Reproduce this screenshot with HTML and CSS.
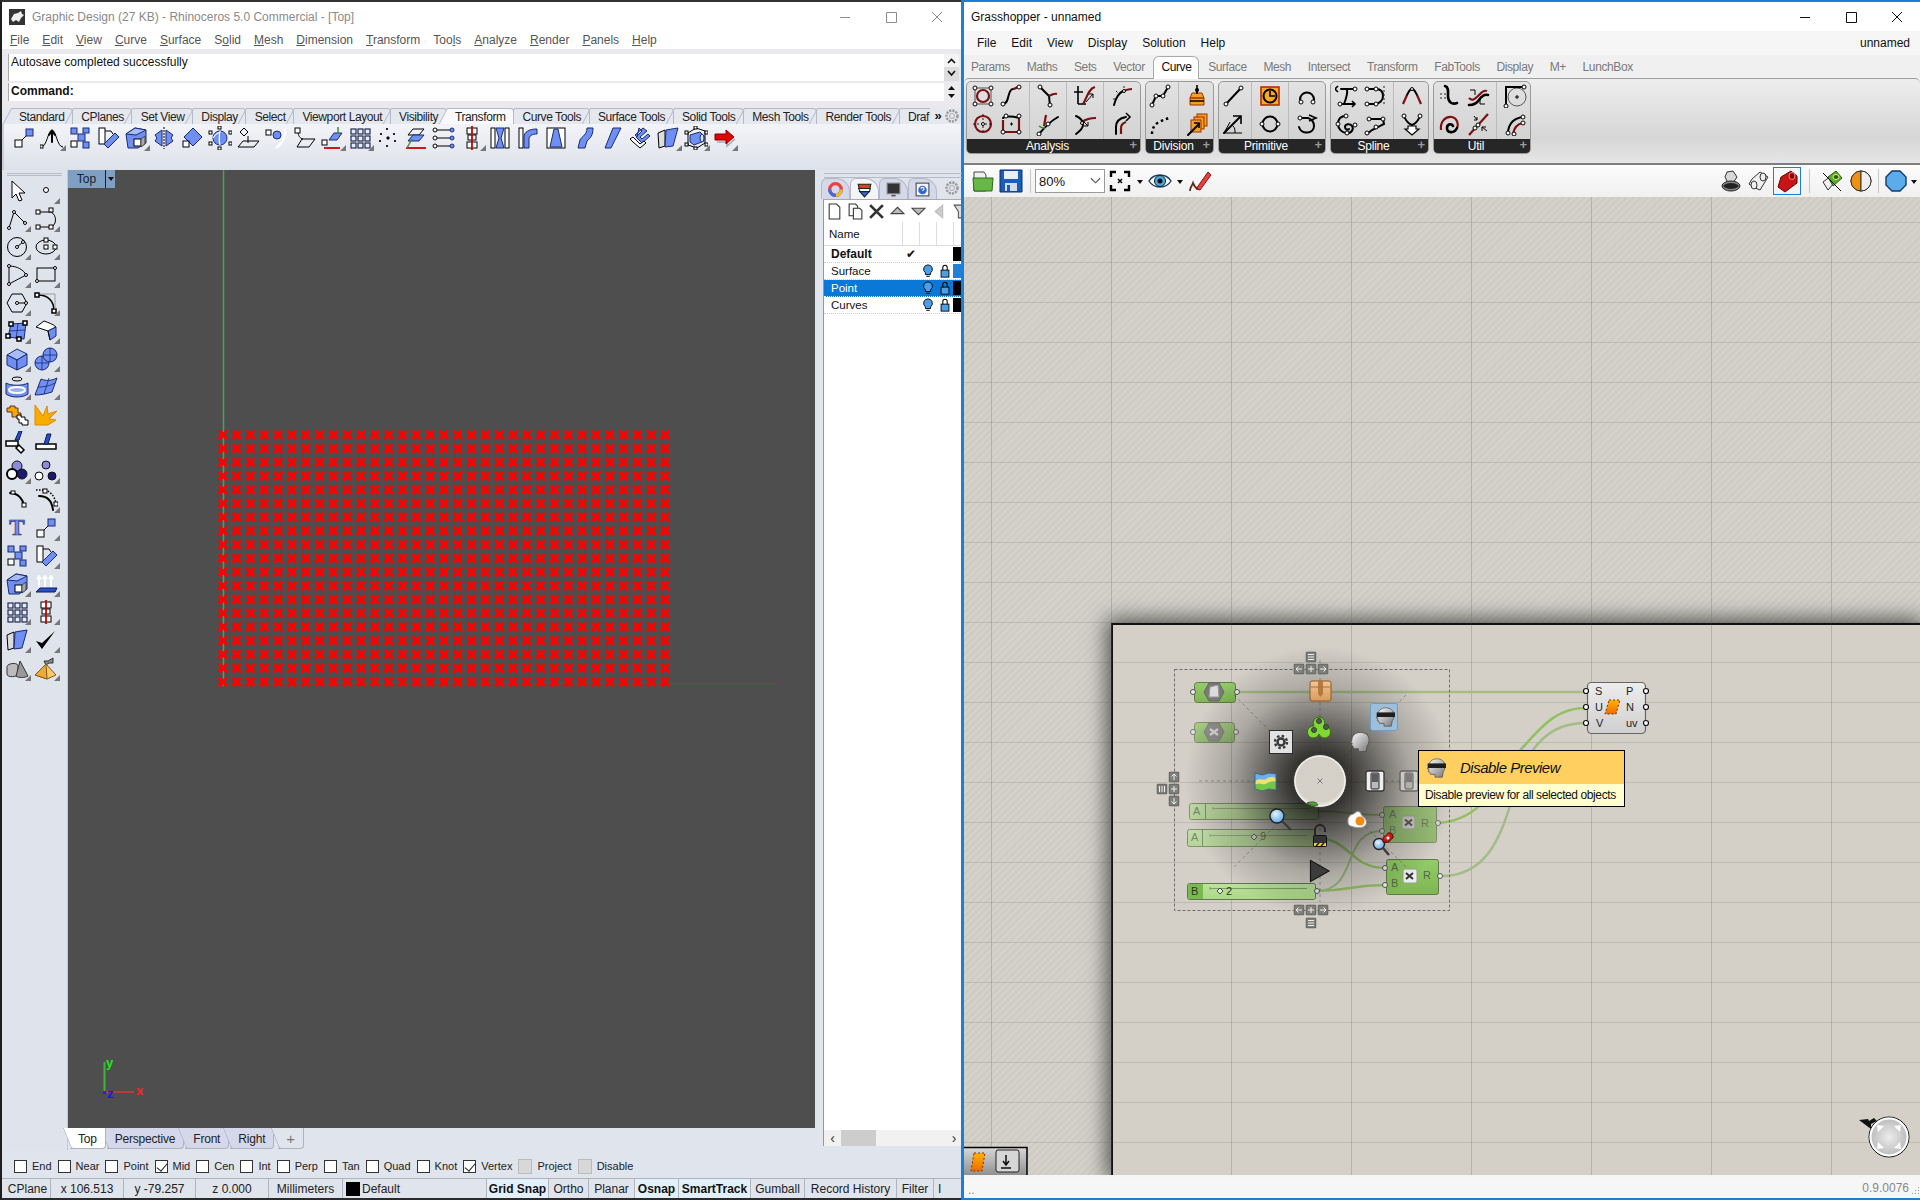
FILE: index.html
```html
<!DOCTYPE html>
<html lang="en">
<head>
<meta charset="utf-8">
<title>Rhinoceros and Grasshopper</title>
<link rel="stylesheet" href="styles.css">
</head>
<body>
<svg class="defs" width="0" height="0" aria-hidden="true">
<defs>
<linearGradient id="gHead" x1="0" y1="0" x2="1" y2="1"><stop offset="0" stop-color="#fff"/><stop offset="1" stop-color="#777"/></linearGradient>
<linearGradient id="gNode" x1="0" y1="0" x2="0" y2="1"><stop offset="0" stop-color="#93cc68"/><stop offset="1" stop-color="#7fb653"/></linearGradient>
<linearGradient id="gSlide" x1="0" y1="0" x2="0" y2="1"><stop offset="0" stop-color="#bde29e"/><stop offset="1" stop-color="#abd886"/></linearGradient>
<linearGradient id="gSurf" x1="0" y1="0" x2="0" y2="1"><stop offset="0" stop-color="#ededed"/><stop offset="1" stop-color="#cfcfcf"/></linearGradient>
<linearGradient id="gOrange" x1="0" y1="0" x2="0" y2="1"><stop offset="0" stop-color="#ffb300"/><stop offset="1" stop-color="#f06a00"/></linearGradient>
<linearGradient id="gBox" x1="0" y1="0" x2="0" y2="1"><stop offset="0" stop-color="#f0c896"/><stop offset="1" stop-color="#d99a5c"/></linearGradient>
<linearGradient id="gDock" x1="0" y1="0" x2="0" y2="1"><stop offset="0" stop-color="#d8d8d8"/><stop offset="1" stop-color="#8a8a8a"/></linearGradient>
<radialGradient id="gShade"><stop offset="0" stop-color="#000" stop-opacity=".78"/><stop offset=".2" stop-color="#000" stop-opacity=".76"/><stop offset=".46" stop-color="#000" stop-opacity=".45"/><stop offset=".67" stop-color="#000" stop-opacity=".2"/><stop offset="1" stop-color="#000" stop-opacity="0"/></radialGradient>
<radialGradient id="gBall" cx=".5" cy=".5" r=".55"><stop offset="0" stop-color="#ececec"/><stop offset="1" stop-color="#b4b4b4"/></radialGradient>
<radialGradient id="gHub" cx=".5" cy=".45" r=".55"><stop offset="0" stop-color="#d6d2ca"/><stop offset=".8" stop-color="#d4d0c8"/><stop offset="1" stop-color="#f2f0ea"/></radialGradient>
<radialGradient id="gGlass" cx=".4" cy=".35" r=".7"><stop offset="0" stop-color="#e4f4ff"/><stop offset="1" stop-color="#5aa2e6"/></radialGradient>
<radialGradient id="gRed" cx=".4" cy=".35" r=".8"><stop offset="0" stop-color="#f03030"/><stop offset="1" stop-color="#8c0a0a"/></radialGradient>
<pattern id="pts" x="216" y="428" width="13.82" height="13.72" patternUnits="userSpaceOnUse"><path class="ptx" d="M3 2.800 10.800 10.900M10.800 2.800 3 10.900"/></pattern>
<symbol id="sa" viewBox="0 0 24 24"><rect class="wh" x="3" y="14" width="7" height="7"/><rect class="bl" x="14" y="3" width="7" height="7"/><path class="kl" d="M10 14l4-4"/></symbol>
<symbol id="sq" viewBox="0 0 24 24"><rect class="bl" x="3" y="2" width="6" height="6"/><rect class="wh" x="3" y="15" width="6" height="6"/><rect class="bl" x="10" y="8" width="7" height="7"/><rect class="bl" x="15" y="2" width="6" height="5"/><rect class="bl" x="15" y="16" width="6" height="6"/></symbol>
<symbol id="rot" viewBox="0 0 24 24"><rect class="wh" x="3" y="2" width="6" height="16"/><path class="bl" d="M19 7l4 4-11 11-4-4z"/><path class="kl" d="M9 5h6l2 3"/></symbol>
<symbol id="sol" viewBox="0 0 24 24"><path class="bl" d="M2 8l9-6 11 2v13l-8 5H4z"/><path class="lb" d="M2 8l9-6 11 2-10 5z"/><rect class="wh" x="10" y="13" width="7" height="7"/><path class="gf" d="M17 13l4-3v8l-4 3z"/></symbol>
<symbol id="grd" viewBox="0 0 24 24"><rect class="gc" x="3" y="3" width="5" height="5"/><rect class="gc" x="10" y="3" width="5" height="5"/><rect class="gc" x="17" y="3" width="5" height="5"/><rect class="gc" x="3" y="10" width="5" height="5"/><rect class="gc" x="10" y="10" width="5" height="5"/><rect class="gc" x="17" y="10" width="5" height="5"/><rect class="gc" x="3" y="17" width="5" height="5"/><rect class="gc" x="10" y="17" width="5" height="5"/><rect class="gc" x="17" y="17" width="5" height="5"/></symbol>
<symbol id="stk" viewBox="0 0 24 24"><rect class="wh" x="7" y="2" width="10" height="6"/><rect class="wh" x="8" y="9" width="8" height="5"/><rect class="wh" x="7" y="16" width="10" height="6"/><path class="rl" d="M12 0v24"/></symbol>
<symbol id="bks" viewBox="0 0 24 24"><path class="wg" d="M2 7l7-3v16l-6 2z"/><path class="bl" d="M10 4l12-2-5 18-8 1z"/></symbol>
<symbol id="head" viewBox="0 0 24 24"><path class="hd" d="M5 11C5 5 9 2 14 2c5 0 9 3 9 8 0 3-1 5-2 6l-1 6h-8v-3H7l-1-3H4.500l1-3L3.500 13z"/></symbol>
<symbol id="blind" viewBox="0 0 24 24"><path class="hd" d="M5 11C5 5 9 2 14 2c5 0 9 3 9 8 0 3-1 5-2 6l-1 6h-8v-3H7l-1-3H4.500l1-3L3.500 13z"/><path class="bf" d="M4 7h20v5H4z"/></symbol>
<symbol id="bL" viewBox="0 0 11 11"><rect class="wb" x=".5" y=".5" width="10" height="10" rx="1"/><path class="wg2" d="M8.500 5.500h-6M5 3 2.500 5.500 5 8"/></symbol>
<symbol id="bR" viewBox="0 0 11 11"><rect class="wb" x=".5" y=".5" width="10" height="10" rx="1"/><path class="wg2" d="M2.500 5.500h6M6 3l2.500 2.500L6 8"/></symbol>
<symbol id="bU" viewBox="0 0 11 11"><rect class="wb" x=".5" y=".5" width="10" height="10" rx="1"/><path class="wg2" d="M5.500 8.500v-6M3 5l2.500-2.500L8 5"/></symbol>
<symbol id="bD" viewBox="0 0 11 11"><rect class="wb" x=".5" y=".5" width="10" height="10" rx="1"/><path class="wg2" d="M5.500 2.500v6M3 6l2.500 2.500L8 6"/></symbol>
<symbol id="bP" viewBox="0 0 11 11"><rect class="wb" x=".5" y=".5" width="10" height="10" rx="1"/><path class="wg2" d="M5.500 2.500v6M2.500 5.500h6"/></symbol>
<symbol id="bH" viewBox="0 0 11 11"><rect class="wb" x=".5" y=".5" width="10" height="10" rx="1"/><path class="wg2" d="M2.500 3h6M2.500 5.500h6M2.500 8h6"/></symbol>
<symbol id="bV" viewBox="0 0 11 11"><rect class="wb" x=".5" y=".5" width="10" height="10" rx="1"/><path class="wg2" d="M3 2.500v6M5.500 2.500v6M8 2.500v6"/></symbol>
<symbol id="tog" viewBox="0 0 22 24"><rect class="tg1" x="2" y="2" width="18" height="20" rx="2"/><rect class="tg2" x="7" y="4" width="8" height="16" rx="1"/><rect class="tg3" x="8" y="5" width="6" height="8"/></symbol>
<symbol id="bulb" viewBox="0 0 14 16"><path class="bu" d="M7 1a5 5 0 0 1 3 9v2H4v-2a5 5 0 0 1 3-9z"/><path class="bu2" d="M5 14h4"/></symbol>
<symbol id="lock" viewBox="0 0 14 16"><rect class="bu" x="2.500" y="7" width="9" height="8"/><path class="lk" d="M4.500 7V4a2.500 2.500 0 0 1 5 0v3"/></symbol>
</defs>
</svg>

<div class="desk">
<section class="rh">
  <header class="rh-title">
    <svg class="rh-logo" viewBox="0 0 16 16"><rect class="lg1" width="16" height="16"/><path class="lg2" d="M2 10l3-5 4-1 3-2 1 3 2 1-3 3-2 4-3-2-3 2z"/></svg>
    <span class="rh-name">Graphic Design (27 KB) - Rhinoceros 5.0 Commercial - [Top]</span>
    <span class="ctrls ctrls-off">
      <svg viewBox="0 0 46 16"><path d="M18 8.500h10"/></svg>
      <svg viewBox="0 0 46 16"><path d="M18.500 3.500h10v10h-10z"/></svg>
      <svg viewBox="0 0 46 16"><path d="M18 3l10 10M28 3 18 13"/></svg>
    </span>
  </header>
  <nav class="rh-menu"><span><u>F</u>ile</span><span><u>E</u>dit</span><span><u>V</u>iew</span><span><u>C</u>urve</span><span><u>S</u>urface</span><span>S<u>o</u>lid</span><span><u>M</u>esh</span><span><u>D</u>imension</span><span><u>T</u>ransform</span><span>Too<u>l</u>s</span><span><u>A</u>nalyze</span><span><u>R</u>ender</span><span><u>P</u>anels</span><span><u>H</u>elp</span></nav>
  <div class="cmd">
    <div class="cmd-hist">Autosave completed successfully</div>
    <div class="cmd-scroll"><svg viewBox="0 0 15 27"><path class="chev" d="M4 9l3.500-3.500L11 9"/><rect class="scr" y="13" width="15" height="14"/><path class="chev" d="M4 17l3.500 4L11 17"/></svg></div>
    <div class="cmd-line">Command:</div>
    <div class="cmd-spin"><svg viewBox="0 0 15 18"><path class="spin" d="M7.500 3 11 7H4zM7.500 15 4 11h7z"/></svg></div>
  </div>
  <div class="rh-tabs">
    <div class="tabs-clip">
      <span class="tab">Standard</span><span class="tab">CPlanes</span><span class="tab">Set View</span><span class="tab">Display</span><span class="tab">Select</span><span class="tab">Viewport Layout</span><span class="tab">Visibility</span><span class="tab on">Transform</span><span class="tab">Curve Tools</span><span class="tab">Surface Tools</span><span class="tab">Solid Tools</span><span class="tab">Mesh Tools</span><span class="tab">Render Tools</span><span class="tab">Draf</span>
    </div>
    <span class="more">»</span>
    <svg class="gear" viewBox="0 0 16 16"><circle class="gr1" cx="8" cy="8" r="5.500"/><circle class="gr2" cx="8" cy="8" r="2.500"/></svg>
  </div>
  <div class="rh-bar">
    <span class="t"><svg viewBox="0 0 24 24"><use href="#sa"/></svg></span>
    <span class="t m"><svg viewBox="0 0 24 24"><path class="kl" d="M1 21C7 21 8 4 12 4s5 17 11 17"/><path class="kt" d="M12 16V6M9 9l3-4 3 4"/><rect class="wh" x="0" y="19" width="3" height="3"/></svg></span>
    <span class="t"><svg viewBox="0 0 24 24"><use href="#sq"/></svg></span>
    <span class="t"><svg viewBox="0 0 24 24"><use href="#rot"/></svg></span>
    <span class="t m"><svg viewBox="0 0 24 24"><use href="#sol"/></svg></span>
    <span class="t"><svg viewBox="0 0 24 24"><path class="bl" d="M10 4v16L3 15l2-3-2-3zM14 4v16l7-5-2-3 2-3z"/><path class="ds" d="M12 1v22"/></svg></span>
    <span class="t"><svg viewBox="0 0 24 24"><path class="bl" d="M13 2l9 9-9 9-9-9z"/><rect class="wh" x="3" y="15" width="6" height="6"/></svg></span>
    <span class="t"><svg viewBox="0 0 24 24"><path class="bl" d="M12 5a7 7 0 1 1-.1 0z"/><path class="wl" d="M5 12c2-3 4-5 7-6M12 5c-1 5-1 10 0 14"/><rect class="wh" x="10" y="0" width="3" height="3"/><rect class="wh" x="1" y="5" width="3" height="3"/><rect class="wh" x="21" y="5" width="3" height="3"/><rect class="wh" x="1" y="16" width="3" height="3"/><rect class="wh" x="21" y="16" width="3" height="3"/><rect class="wh" x="10" y="21" width="3" height="3"/></svg></span>
    <span class="t"><svg viewBox="0 0 24 24"><path class="kl" d="M8 2l4 4-4 4-4-4zM2 21l5-6h16l-5 6zM12 10v7"/></svg></span>
    <span class="t"><svg viewBox="0 0 24 24"><rect class="wh" x="2" y="4" width="5" height="5"/><circle class="bl" cx="13" cy="9" r="4"/><path class="wl2" d="M21 2c1 8-2 15-9 20"/></svg></span>
    <span class="t"><svg viewBox="0 0 24 24"><rect class="wh" x="3" y="2" width="5" height="5"/><path class="kl" d="M6 7c1 4 2 5 5 6M10 13h13l-6 8H5z"/></svg></span>
    <span class="t m"><svg viewBox="0 0 24 24"><rect class="wh" x="2" y="14" width="5" height="5"/><path class="bl" d="M9 14l5-7h8l-5 7z"/><path class="rl" d="M4 22h16"/><path class="grn" d="M18 8V1"/></svg></span>
    <span class="t m"><svg viewBox="0 0 24 24"><use href="#grd"/></svg></span>
    <span class="t"><svg viewBox="0 0 24 24"><path class="dots" d="M10 3h4M4 8h3M17 8h3M11 12h2M3 15h3M18 15h3M10 20h4"/><path class="kl" d="M12 10v4M10 12h4"/></svg></span>
    <span class="t"><svg viewBox="0 0 24 24"><path class="kl" d="M9 3h11l-5 6H4z"/><path class="bl" d="M9 9h11l-5 6H4z"/><path class="rl" d="M2 22h20"/><path class="grn" d="M3 22 8 13"/></svg></span>
    <span class="t"><svg viewBox="0 0 24 24"><circle class="wh" cx="3" cy="4" r="2"/><circle class="bl" cx="20" cy="4" r="2"/><path class="kl" d="M5 4h13"/><circle class="wh" cx="3" cy="12" r="2"/><circle class="bl" cx="20" cy="12" r="2"/><path class="kl" d="M5 12h13"/><circle class="wh" cx="3" cy="20" r="2"/><circle class="bl" cx="20" cy="20" r="2"/><path class="kl" d="M5 20h13"/></svg></span>
    <span class="t m"><svg viewBox="0 0 24 24"><use href="#stk"/></svg></span>
    <span class="t"><svg viewBox="0 0 24 24"><rect class="wh" x="3" y="2" width="4" height="20"/><rect class="wh" x="17" y="2" width="4" height="20"/><path class="bl" d="M8 2h8l-3 10 3 10H8l3-10z"/></svg></span>
    <span class="t"><svg viewBox="0 0 24 24"><rect class="wh" x="3" y="2" width="4" height="20"/><path class="bl" d="M8 22V11c0-5 5-8 13-8v5c-5 0-8 2-8 5v9z"/></svg></span>
    <span class="t"><svg viewBox="0 0 24 24"><rect class="wh" x="3" y="2" width="18" height="20"/><path class="bl" d="M10 3h4l4 18H6z"/></svg></span>
    <span class="t"><svg viewBox="0 0 24 24"><path class="bl" d="M15 2h6c0 8-3 10-6 13l-2 7H6l2-8c2-4 7-5 7-12z"/></svg></span>
    <span class="t"><svg viewBox="0 0 24 24"><path class="bl" d="M13 2h8l-10 20H5z"/></svg></span>
    <span class="t"><svg viewBox="0 0 24 24"><path class="bl" d="M11 2l3 3-6 6 6 6 8-7-2-2-6 5-2-2 7-6-4-3-8 7 2 2z"/><path class="wh" d="M2 13l3 3 7 6 6-5-2-2-4 3-7-7z"/></svg></span>
    <span class="t m"><svg viewBox="0 0 24 24"><use href="#bks"/></svg></span>
    <span class="t m"><svg viewBox="0 0 24 24"><path class="kl" d="M4 7l8-5 9 3v12l-8 5-9-3z"/><path class="bl" d="M6 9l10-3 4 4v5l-10 4-4-3z"/><ellipse class="lb2" cx="18" cy="12" rx="2" ry="4"/><rect class="wh" x="10" y="0" width="3" height="3"/><rect class="wh" x="1" y="5" width="3" height="3"/><rect class="wh" x="21" y="5" width="3" height="3"/><rect class="wh" x="1" y="17" width="3" height="3"/><rect class="wh" x="21" y="17" width="3" height="3"/><rect class="wh" x="10" y="21" width="3" height="3"/></svg></span>
    <span class="t m"><svg viewBox="0 0 24 24"><path class="ars" d="M5 16h10v4l8-7"/><path class="arr" d="M3 8h11V4l8 7-8 7v-4H3z"/></svg></span>
  </div>

  <div class="rh-main">
    <aside class="side">
      <div class="side-grip"></div>
      <div class="side-grid">
        <span class="t"><svg viewBox="0 0 24 24"><path class="wh" d="M7 2v17l4-4 3 7 3-1-3-7h6z"/></svg></span>
        <span class="t m"><svg viewBox="0 0 24 24"><circle class="wh" cx="12" cy="11" r="2.500"/></svg></span>
        <span class="t m"><svg viewBox="0 0 24 24"><path class="kl" d="M4 21 9 5l11 11"/><circle class="wh" cx="4" cy="21" r="1.500"/><circle class="wh" cx="9" cy="5" r="1.500"/><circle class="wh" cx="20" cy="16" r="1.500"/></svg></span>
        <span class="t m"><svg viewBox="0 0 24 24"><path class="kl" d="M4 5h13c6 3 6 13 0 15H4"/><rect class="wh" x="2" y="3" width="4" height="4"/><rect class="wh" x="15" y="1" width="4" height="4"/><rect class="wh" x="2" y="18" width="4" height="4"/><rect class="wh" x="15" y="18" width="4" height="4"/></svg></span>
        <span class="t m"><svg viewBox="0 0 24 24"><circle class="kl" cx="12" cy="12" r="9.500"/><path class="kl" d="M12 12l6-5"/><circle class="wh" cx="12" cy="12" r="1.500"/><circle class="wh" cx="18" cy="7" r="1.500"/></svg></span>
        <span class="t m"><svg viewBox="0 0 24 24"><ellipse class="kl" cx="12" cy="12" rx="10" ry="7"/><rect class="wh" x="10" y="3" width="4" height="4"/><rect class="wh" x="10" y="10" width="4" height="4"/><rect class="wh" x="19" y="10" width="4" height="4"/></svg></span>
        <span class="t m"><svg viewBox="0 0 24 24"><path class="kl" d="M4 3v18L21 12C19 7 12 3 4 3z"/><circle class="wh" cx="4" cy="3" r="1.500"/><circle class="wh" cx="4" cy="21" r="1.500"/><circle class="wh" cx="21" cy="12" r="1.500"/></svg></span>
        <span class="t m"><svg viewBox="0 0 24 24"><rect class="kl" x="3" y="5" width="18" height="13"/><circle class="wh" cx="3" cy="18" r="1.500"/><circle class="wh" cx="21" cy="5" r="1.500"/></svg></span>
        <span class="t m"><svg viewBox="0 0 24 24"><path class="kl" d="M7 3h10l5 9-5 9H7l-5-9z"/><path class="kl" d="M12 12h9"/><circle class="wh" cx="12" cy="12" r="1.500"/><circle class="wh" cx="21" cy="12" r="1.500"/></svg></span>
        <span class="t m"><svg viewBox="0 0 24 24"><path class="kt2" d="M4 4c10 0 16 6 16 16"/><rect class="wh2" x="1" y="2" width="4" height="4"/><rect class="wh2" x="18" y="18" width="4" height="4"/><path class="gy" d="M6 3h15v15"/></svg></span>
        <span class="t m"><svg viewBox="0 0 24 24"><path class="bl" d="M6 5l15-1-2 16-16-2z"/><path class="dk" d="M13 5l-2 15M4 12l16-1"/><rect class="wh2" x="4" y="3" width="4" height="4"/><rect class="wh2" x="18" y="2" width="4" height="4"/><rect class="wh2" x="1" y="15" width="4" height="4"/><rect class="wh2" x="12" y="18" width="4" height="4"/></svg></span>
        <span class="t m"><svg viewBox="0 0 24 24"><path class="wh" d="M2 8l8-6c5 2 9 3 12 6l-8 4z"/><path class="bl" d="M14 12l8-4v9l-6 4z"/><path class="wh" d="M14 12l2 9"/></svg></span>
        <span class="t m"><svg viewBox="0 0 24 24"><path class="lb" d="M2 8l10-6 10 5-10 6z"/><path class="bl" d="M2 8l10 5v10L2 18z"/><path class="bl" d="M12 13l10-6v11l-10 5z"/></svg></span>
        <span class="t m"><svg viewBox="0 0 24 24"><circle class="bl" cx="8" cy="16" r="7"/><circle class="bl" cx="16" cy="8" r="7"/><path class="dk" d="M9 8h14M16 1v14M1 16h14M8 9v14"/></svg></span>
        <span class="t m"><svg viewBox="0 0 24 24"><ellipse class="kl" cx="12" cy="4" rx="5" ry="2"/><path class="bl" d="M1 8c5 3 17 3 22 0v11c-5 4-17 4-22 0z"/><ellipse class="wr" cx="12" cy="15" rx="8" ry="3"/></svg></span>
        <span class="t m"><svg viewBox="0 0 24 24"><path class="bl" d="M7 4c5 2 10 2 16-1l-5 14c-6 2-12 3-17 3z"/><path class="dk" d="M15 3 10 19M4 12c6 0 12-1 17-4"/></svg></span>
        <span class="t"><svg viewBox="0 0 24 24"><path class="og" d="M5 3h5v2h3v5h3v4H7V9H2V5h3z"/><path class="wh" d="M12 12h4v2h4v3h3v5h-6v-2h-3v-4h-2z"/></svg></span>
        <span class="t"><svg viewBox="0 0 24 24"><path class="og0" d="M1 22V2l8 11 4-10 1 8 9-3-8 8 7 1-8 5z"/></svg></span>
        <span class="t"><svg viewBox="0 0 24 24"><rect class="wh2" x="1" y="10" width="12" height="5"/><path class="db" d="M10 9l4-9h3l-3 9z"/><path class="wh2" d="M14 14l5 5-3 3-5-5z"/></svg></span>
        <span class="t"><svg viewBox="0 0 24 24"><rect class="wh2" x="2" y="13" width="20" height="5"/><path class="db" d="M10 13l3-10h4l-3 10z"/></svg></span>
        <span class="t m"><svg viewBox="0 0 24 24"><circle class="li" cx="12" cy="7" r="5"/><circle class="wk" cx="7" cy="15" r="5"/><circle class="nv" cx="17" cy="15" r="5"/></svg></span>
        <span class="t m"><svg viewBox="0 0 24 24"><circle class="li" cx="12" cy="6" r="4"/><circle class="wh" cx="5" cy="17" r="4"/><circle class="nv" cx="18" cy="17" r="4"/></svg></span>
        <span class="t"><svg viewBox="0 0 24 24"><path class="kt" d="M5 5c8 0 13 6 14 13"/><rect class="wh" x="6" y="3" width="4" height="3"/><rect class="wh" x="17" y="15" width="4" height="4"/></svg></span>
        <span class="t m"><svg viewBox="0 0 24 24"><path class="kt" d="M5 8c8 0 13 5 14 14"/><path class="dl" d="M2 2h8c6 1 11 6 12 14"/><rect class="wh" x="9" y="1" width="4" height="4"/><rect class="wh" x="20" y="14" width="4" height="4"/></svg></span>
        <span class="t"><svg viewBox="0 0 24 24"><text class="ttxt" x="12" y="19">T</text></svg></span>
        <span class="t m"><svg viewBox="0 0 24 24"><use href="#sa"/></svg></span>
        <span class="t"><svg viewBox="0 0 24 24"><use href="#sq"/></svg></span>
        <span class="t m"><svg viewBox="0 0 24 24"><use href="#rot"/></svg></span>
        <span class="t m"><svg viewBox="0 0 24 24"><use href="#sol"/></svg></span>
        <span class="t m"><svg viewBox="0 0 24 24"><path class="wt" d="M5 15V5M3 7l2-3 2 3M11 15V5M9 7l2-3 2 3M17 15V5M15 7l2-3 2 3"/><path class="db" d="M2 20l4-4h17l-2 4z"/></svg></span>
        <span class="t m"><svg viewBox="0 0 24 24"><use href="#grd"/></svg></span>
        <span class="t m"><svg viewBox="0 0 24 24"><use href="#stk"/></svg></span>
        <span class="t m"><svg viewBox="0 0 24 24"><use href="#bks"/></svg></span>
        <span class="t m"><svg viewBox="0 0 24 24"><path class="ck" d="M2 13l6 8L21 3 8 15z"/></svg></span>
        <span class="t m"><svg viewBox="0 0 24 24"><path class="gf2" d="M2 11c0-4 11-5 11-1v8c0 3-11 4-11 0z"/><path class="gf3" d="M15 5l8 15c-3 2-10 2-12 0z"/></svg></span>
        <span class="t m"><svg viewBox="0 0 24 24"><path class="gb" d="M10 5h4l5-3v5h-4l-3 2z"/><path class="og2" d="M12 8l10 11-9 4-12-4z"/><path class="og3" d="M12 8l1 15-12-4z"/></svg></span>
      </div>
    </aside>

    <div class="center">
      <div class="vp">
        <div class="vp-tag"><span class="vp-name">Top</span><span class="vp-btn"></span></div>
        <svg class="vp-svg" viewBox="68 170 747 958">
          <path class="ax-g" d="M223.500 170V686"/>
          <path class="ax-r" d="M223 683.500H778"/>
          <rect fill="url(#pts)" x="216" y="428" width="456" height="260.700"/>
          <path class="ax-g2" d="M104.500 1062V1092"/>
          <path class="ax-r2" d="M104 1092H134"/>
          <rect class="ax-b" x="103" y="1091" width="3" height="3"/>
          <text class="axt axt-y" x="106" y="1067">y</text>
          <text class="axt axt-x" x="136" y="1095">x</text>
          <text class="axt axt-z" x="107" y="1098">z</text>
        </svg>
      </div>
      <div class="vp-tabs"><span class="vt on">Top</span><span class="vt">Perspective</span><span class="vt">Front</span><span class="vt">Right</span><span class="vt vt-add">+</span></div>
    </div>

    <aside class="pnl">
      <div class="pnl-tabs">
        <span class="pt"><svg viewBox="0 0 16 16"><circle class="w1" cx="8" cy="8" r="5.500"/><circle class="w2" cx="8" cy="8" r="5.500"/><circle class="w3" cx="8" cy="8" r="5.500"/></svg></span>
        <span class="pt on"><svg viewBox="0 0 16 16"><path class="ly1" d="M2 3h12l-1 4H3z"/><path class="ly2" d="M2.500 7h11l-1 3H4z"/><path class="ly3" d="M3.500 10h9L8 15z"/></svg></span>
        <span class="pt"><svg viewBox="0 0 16 16"><rect class="mn" x="2" y="2" width="12" height="10"/><path class="mn2" d="M6 13h4v1.500H6z"/></svg></span>
        <span class="pt"><svg viewBox="0 0 16 16"><rect class="hp" x="2" y="2" width="12" height="12"/><circle class="hp2" cx="8" cy="8.500" r="4"/><path class="hp3" d="M6.500 7.500c0-2 3-2 3 0 0 1-1.500 1-1.500 2"/></svg></span>
        <svg class="gear gear-p" viewBox="0 0 16 16"><circle class="gr1" cx="8" cy="8" r="5.500"/><circle class="gr2" cx="8" cy="8" r="2.500"/></svg>
      </div>
      <div class="pnl-body">
        <div class="pnl-tools">
          <svg viewBox="0 0 14 16"><path class="dc" d="M2 1h7l3 3v11H2z"/></svg>
          <svg viewBox="0 0 14 16"><path class="dc" d="M1 1h6l2 2v9H1z"/><path class="dc" d="M5 5h6l2 2v8H5z"/></svg>
          <svg viewBox="0 0 14 16"><path class="xx" d="M1 2l12 12M13 2 1 14"/></svg>
          <svg viewBox="0 0 14 16"><path class="tri" d="M7 4l6 6H1z"/></svg>
          <svg viewBox="0 0 14 16"><path class="tri" d="M1 5h12l-6 6z"/></svg>
          <svg viewBox="0 0 14 16"><path class="tri2" d="M3 8l7-6v12z"/></svg>
          <svg viewBox="0 0 14 16"><path class="tri3" d="M1 2h12L9 8v6H5V8z"/></svg>
        </div>
        <div class="lrow lhead"><span>Name</span><i></i><i></i><i></i><i></i></div>
        <div class="lrow lrow-def"><b>Default</b><span class="chk">✔</span><i></i><i></i><span class="sw"></span></div>
        <div class="lrow"><span>Surface</span><i></i><svg viewBox="0 0 14 16"><use href="#bulb"/></svg><svg viewBox="0 0 14 16"><use href="#lock"/></svg><span class="sw sw-b"></span></div>
        <div class="lrow sel"><span>Point</span><i></i><svg viewBox="0 0 14 16"><use href="#bulb"/></svg><svg viewBox="0 0 14 16"><use href="#lock"/></svg><span class="sw"></span></div>
        <div class="lrow"><span>Curves</span><i></i><svg viewBox="0 0 14 16"><use href="#bulb"/></svg><svg viewBox="0 0 14 16"><use href="#lock"/></svg><span class="sw"></span></div>
      </div>
      <div class="pnl-scroll"><span class="lt">‹</span><span class="thumb"></span><span class="rt">›</span></div>
    </aside>
  </div>

  <div class="osnap">
    <label class="os"><i class="bx"></i>End</label><label class="os"><i class="bx"></i>Near</label><label class="os"><i class="bx"></i>Point</label><label class="os"><i class="bx ck-on"></i>Mid</label><label class="os"><i class="bx"></i>Cen</label><label class="os"><i class="bx"></i>Int</label><label class="os"><i class="bx"></i>Perp</label><label class="os"><i class="bx"></i>Tan</label><label class="os"><i class="bx"></i>Quad</label><label class="os"><i class="bx"></i>Knot</label><label class="os"><i class="bx ck-on"></i>Vertex</label><label class="os os-g"><i class="bx bx-g"></i>Project</label><label class="os os-g"><i class="bx bx-g"></i>Disable</label>
  </div>
  <footer class="stat">
    <span>CPlane</span><span>x 106.513</span><span>y -79.257</span><span>z 0.000</span><span>Millimeters</span><span class="st-l"><i class="st-sw"></i>Default</span><span class="st-on">Grid Snap</span><span>Ortho</span><span>Planar</span><span class="st-on">Osnap</span><span class="st-on">SmartTrack</span><span>Gumball</span><span>Record History</span><span>Filter</span><span class="st-end">I</span>
  </footer>
</section>

<section class="gh">
  <header class="gh-title">
    <span>Grasshopper - unnamed</span>
    <span class="ctrls">
      <svg viewBox="0 0 46 16"><path d="M18 8.500h10"/></svg>
      <svg viewBox="0 0 46 16"><path d="M18.500 3.500h10v10h-10z"/></svg>
      <svg viewBox="0 0 46 16"><path d="M18 3l10 10M28 3 18 13"/></svg>
    </span>
  </header>
  <nav class="gh-menu"><span>File</span><span>Edit</span><span>View</span><span>Display</span><span>Solution</span><span>Help</span><em>unnamed</em></nav>
  <div class="gh-tabs"><span>Params</span><span>Maths</span><span>Sets</span><span>Vector</span><span class="on">Curve</span><span>Surface</span><span>Mesh</span><span>Intersect</span><span>Transform</span><span>FabTools</span><span>Display</span><span>M+</span><span>LunchBox</span></div>
  <div class="ribbon">
    <div class="grp g1">
      <div class="grp-b">
        <div class="sec sec-w">
          <span class="gi"><svg viewBox="0 0 24 24"><rect class="gl" x="4" y="4" width="16" height="16"/><circle class="rd" cx="12" cy="12" r="6"/><circle class="gd" cx="4" cy="4" r="2"/><circle class="gd" cx="20" cy="4" r="2"/><circle class="gd" cx="4" cy="20" r="2"/><circle class="gd" cx="20" cy="20" r="2"/></svg></span>
          <span class="gi"><svg viewBox="0 0 24 24"><circle class="rd" cx="12" cy="12" r="8"/><path class="ds2" d="M12 2v20M2 12h20"/><circle class="gd" cx="12" cy="12" r="1.500"/></svg></span>
          <span class="gi"><svg viewBox="0 0 24 24"><path class="kt" d="M4 20c7 0 4-15 10-15"/><path class="rd" d="M14 5c2 0 3-1 5-2"/><circle class="gd" cx="4" cy="20" r="2"/><circle class="gd" cx="20" cy="3" r="2"/></svg></span>
          <span class="gi"><svg viewBox="0 0 24 24"><path class="rd" d="M4 8V20h16V7"/><path class="kt" d="M4 6c2-2 10-2 16 0"/><circle class="gd" cx="7" cy="4" r="2"/><circle class="gd" cx="20" cy="4" r="2"/><circle class="gd" cx="4" cy="20" r="2"/><circle class="gd" cx="20" cy="20" r="2"/><path class="kl" d="M11 12h3M12.500 10.500v3"/></svg></span>
        </div>
        <div class="sec">
          <span class="gi"><svg viewBox="0 0 24 24"><path class="kt" d="M4 3l9 9 1 10"/><path class="rd" d="M13 12c2-1 5-3 8-2"/><circle class="gd" cx="4" cy="3" r="2"/><circle class="gd" cx="14" cy="21" r="2"/></svg></span>
          <span class="gi"><svg viewBox="0 0 24 24"><path class="kt" d="M3 22C8 16 13 10 22 5"/><path class="rd" d="M10 3 8 14"/><path class="grn" d="M3 14c2 2 4 2 6 2"/><circle class="gd" cx="12" cy="12" r="2"/><circle class="gd" cx="3" cy="22" r="2"/></svg></span>
        </div>
        <div class="sec">
          <span class="gi"><svg viewBox="0 0 24 24"><path class="kt2" d="M5 2v18M1 8h9M5 20h8"/><path class="rd" d="M22 3C15 5 14 14 10 20"/><path class="kl" d="M13 18 20 10M16 10h4v4"/></svg></span>
          <span class="gi"><svg viewBox="0 0 24 24"><path class="kt" d="M3 4c5 2 7 6 7 9s-3 6-7 9"/><path class="rd" d="M9 10c4-3 8-4 14-4"/><path class="kl" d="M9 8l6 6M15 10v4h-4"/><circle class="gd" cx="9" cy="11" r="1.500"/></svg></span>
        </div>
        <div class="sec">
          <span class="gi"><svg viewBox="0 0 24 24"><path class="kt" d="M4 21c2-8 5-12 9-14"/><path class="rd" d="M13 7c3-1 6-2 9-2"/><path class="ds2" d="M6 7l2 2M14 2l0 3M3 15h3"/><circle class="gd" cx="14" cy="7" r="1.500"/></svg></span>
          <span class="gi"><svg viewBox="0 0 24 24"><path class="kt" d="M6 22V15C6 9 10 6 16 5"/><path class="rd" d="M11 22v-6c0-3 2-5 5-6"/><path class="kt2" d="M16 1l4 4-4 4"/></svg></span>
        </div>
      </div>
      <div class="grp-h">Analysis<i>+</i></div>
    </div>
    <div class="grp g2">
      <div class="grp-b">
        <div class="sec sec-s">
          <span class="gi"><svg viewBox="0 0 24 24"><path class="kt" d="M4 21 8 12h7l5-9"/><circle class="gd" cx="4" cy="21" r="2"/><circle class="gd" cx="8" cy="12" r="2"/><circle class="gd" cx="15" cy="12" r="2"/><circle class="gd" cx="20" cy="3" r="2"/></svg></span>
          <span class="gi"><svg viewBox="0 0 24 24"><path class="dl2" d="M4 22c0-6 3-10 7-12s7-3 10-4"/></svg></span>
        </div>
        <div class="sec">
          <span class="gi"><svg viewBox="0 0 24 24"><path class="ogf" d="M7 9h10l2 5H5zM5 14h14v7H5z"/><path class="blk" d="M12 1v9M5 17h14"/><circle class="blk2" cx="12" cy="6" r="2"/></svg></span>
          <span class="gi"><svg viewBox="0 0 24 24"><rect class="ogf" x="12" y="2" width="10" height="12"/><rect class="ogf" x="9" y="5" width="10" height="12"/><rect class="ogf" x="6" y="8" width="10" height="12"/><path class="kt" d="M3 23 14 12"/><path class="kt2" d="M9 11h5v5"/></svg></span>
        </div>
      </div>
      <div class="grp-h">Division<i>+</i></div>
    </div>
    <div class="grp g3">
      <div class="grp-b">
        <div class="sec sec-s">
          <span class="gi"><svg viewBox="0 0 24 24"><path class="kt" d="M5 20 20 4"/><circle class="gd" cx="5" cy="20" r="2"/><circle class="gd" cx="20" cy="4" r="2"/></svg></span>
          <span class="gi"><svg viewBox="0 0 24 24"><path class="kl" d="M3 21h18M3 21 9 10"/><path class="kt" d="M3 21 19 5"/><path class="kt2" d="M12 4h8v8"/><path class="kl" d="M12 14c2 2 2 4 2 7"/></svg></span>
        </div>
        <div class="sec">
          <span class="gi"><svg viewBox="0 0 24 24"><rect class="ogr" x="3" y="3" width="18" height="18"/><circle class="kt" cx="12" cy="12" r="6.500"/><path class="kt2" d="M12 7v5h5"/></svg></span>
          <span class="gi"><svg viewBox="0 0 24 24"><circle class="kt" cx="12" cy="12" r="7.500"/><circle class="gd" cx="4" cy="12" r="2"/><circle class="gd" cx="20" cy="12" r="2"/></svg></span>
        </div>
        <div class="sec">
          <span class="gi"><svg viewBox="0 0 24 24"><path class="kt" d="M5 16C5 6 19 6 19 16"/><circle class="gd" cx="6" cy="18" r="2"/><circle class="gd" cx="18" cy="18" r="2"/></svg></span>
          <span class="gi"><svg viewBox="0 0 24 24"><path class="kt" d="M4 15c2 8 15 7 15-1 0-5-3-7-6-8H5"/><path class="kt2" d="M14 3l7 3-7 3"/><circle class="gd" cx="5" cy="6" r="2"/></svg></span>
        </div>
      </div>
      <div class="grp-h">Primitive<i>+</i></div>
    </div>
    <div class="grp g4">
      <div class="grp-b">
        <div class="sec sec-w">
          <span class="gi"><svg viewBox="0 0 24 24"><path class="kt" d="M6 5h12M12 5c1 5-1 10-3 15M6 20h13"/><path class="kt2" d="M3 2 0 5l3 3M17 17l3 3-3 3"/><circle class="gd" cx="20" cy="5" r="2"/><circle class="gd" cx="5" cy="20" r="2"/></svg></span>
          <span class="gi"><svg viewBox="0 0 24 24"><path class="kt" d="M11 4c-5 0-8 3-8 8s4 9 9 9c5 0 7-4 5-7s-7-2-7 1 3 3 4 2"/><circle class="gd" cx="11" cy="4" r="2"/><circle class="gd" cx="3" cy="12" r="2"/><circle class="gd" cx="12" cy="21" r="2"/><circle class="gd" cx="20" cy="13" r="2"/></svg></span>
          <span class="gi"><svg viewBox="0 0 24 24"><path class="kt" d="M3 5h10c5 0 7 3 7 7s-3 8-9 8H4"/><path class="ds2" d="M21 2v20"/><circle class="gd" cx="4" cy="5" r="2"/><circle class="gd" cx="13" cy="5" r="2"/><circle class="gd" cx="4" cy="20" r="2"/><circle class="gd" cx="13" cy="20" r="2"/></svg></span>
          <span class="gi"><svg viewBox="0 0 24 24"><path class="kt" d="M6 7h14l1 5-12 6-5 4"/><circle class="gd" cx="6" cy="7" r="2"/><circle class="gd" cx="20" cy="7" r="2"/><circle class="gd" cx="13" cy="15" r="2"/><circle class="gd" cx="4" cy="21" r="2"/></svg></span>
        </div>
        <div class="sec">
          <span class="gi"><svg viewBox="0 0 24 24"><path class="kt" d="M7 11c2-4 3-6 5-6s3 2 5 6"/><path class="rd" d="M3 20l4-9M17 11l4 9"/><circle class="gd" cx="12" cy="5" r="1.500"/></svg></span>
          <span class="gi"><svg viewBox="0 0 24 24"><path class="kt" d="M4 4c2 5 5 8 8 9 3-1 6-4 8-9"/><path class="wp" d="M8 14h8v3h3l-7 6-7-6h3z"/><circle class="gd" cx="4" cy="4" r="2"/><circle class="gd" cx="20" cy="4" r="2"/></svg></span>
        </div>
      </div>
      <div class="grp-h">Spline<i>+</i></div>
    </div>
    <div class="grp g5">
      <div class="grp-b">
        <div class="sec sec-w">
          <span class="gi"><svg viewBox="0 0 24 24"><path class="kt3" d="M7 2c4 1 3 6 3 10 0 6 4 9 9 7"/><path class="ds2" d="M2 10h7M2 14h7"/></svg></span>
          <span class="gi"><svg viewBox="0 0 24 24"><path class="rd" d="M3 18C2 9 8 4 14 5c5 1 7 7 5 11"/><path class="kt3" d="M19 16c-3 6-10 5-10 0 0-4 5-5 6-2"/></svg></span>
          <span class="gi"><svg viewBox="0 0 24 24"><path class="rd" d="M3 14c3 3 5 2 9-2s6-6 9-5"/><path class="kt3" d="M3 21c5 0 8-2 10-5s5-6 9-5"/><path class="kl" d="M4 6h5v5M19 20h-5v-5"/></svg></span>
          <span class="gi"><svg viewBox="0 0 24 24"><path class="rd" d="M3 23 22 2"/><circle class="gd" cx="12" cy="13" r="2"/><circle class="gd" cx="9" cy="16" r="2"/><path class="kl" d="M8 4l3 4M8 8h3V5M21 19l-5-4M16 19v-4h4"/></svg></span>
        </div>
        <div class="sec">
          <span class="gi"><svg viewBox="0 0 24 24"><circle class="gl" cx="14" cy="13" r="9"/><path class="kt" d="M3 22V3h18"/><circle class="gd" cx="3" cy="22" r="2"/><circle class="gd" cx="21" cy="3" r="2"/><path class="kl" d="M12 13h4M14 11v4"/></svg></span>
          <span class="gi"><svg viewBox="0 0 24 24"><path class="kt" d="M5 20C6 11 12 6 20 5"/><path class="rd" d="M10 22c1-6 4-10 10-11"/><circle class="gd" cx="5" cy="21" r="2"/><circle class="gd" cx="20" cy="5" r="2"/><circle class="gd" cx="11" cy="22" r="2"/><circle class="gd" cx="20" cy="11" r="2"/></svg></span>
        </div>
      </div>
      <div class="grp-h">Util<i>+</i></div>
    </div>
  </div>

  <div class="gh-tool">
    <svg class="ti" viewBox="0 0 24 24"><path class="ff1" d="M3 3h10l2 3v16H3z"/><path class="ff2" d="M2 9h20l-1 13H3z"/></svg>
    <svg class="ti" viewBox="0 0 24 24"><path class="fl1" d="M1 1h22v22H1z"/><rect class="fl2" x="5" y="2" width="14" height="8"/><rect class="fl3" x="6" y="14" width="12" height="8"/><rect class="fl4" x="8" y="16" width="3" height="6"/></svg>
    <i class="tsep"></i>
    <div class="combo">80%<svg viewBox="0 0 12 8"><path d="M1 1l5 5 5-5"/></svg></div>
    <svg class="ti ti-z" viewBox="0 0 24 24"><path class="zm" d="M3 8V3h5M16 3h5v5M21 16v5h-5M8 21H3v-5"/><path class="zm2" d="M10 10l4 4M14 10l-4 4"/></svg>
    <i class="drop"></i>
    <svg class="ti ti-e" viewBox="0 0 24 24"><path class="ey1" d="M1 12c5-8 17-8 22 0-5 8-17 8-22 0z"/><circle class="ey2" cx="12" cy="12" r="5.500"/><circle class="ey3" cx="12" cy="12" r="2.500"/></svg>
    <i class="drop"></i>
    <svg class="ti ti-b" viewBox="0 0 24 24"><path class="br1" d="M8 20 20 3l3 3-11 15z"/><path class="br2" d="M2 22c0-4 2-5 3-8 1 3 3 5 5 6"/></svg>
    <span class="spacer"></span>
    <svg class="ti ti-r" viewBox="0 0 24 24"><path class="pv1" d="M8 3l6-1 4 6-4 6H9L6 8z"/><ellipse class="pv2" cx="12" cy="17" rx="9" ry="5"/><path class="pv3" d="M4 17c3-4 13-4 16 0-3 4-13 4-16 0z"/></svg>
    <svg class="ti ti-r2" viewBox="0 0 24 24"><path class="pv4" d="M6 10l8-7 8 5-8 13-7-3-4-3z"/><ellipse class="pv4" cx="17" cy="8" rx="3" ry="4"/><ellipse class="pv4" cx="8" cy="16" rx="3" ry="4"/></svg>
    <span class="ti-sel"><svg viewBox="0 0 24 24"><path class="pv5" d="M6 8l10-6 6 5v7l-12 9-7-5z"/><ellipse class="pv6" cx="17" cy="7" rx="3" ry="3.500"/></svg></span>
    <i class="tsep tsep-2"></i>
    <svg class="ti ti-r" viewBox="0 0 24 24"><path class="pv4" d="M3 13l12-9 4 4-11 13z"/><path class="pv7" d="M8 8l8-6 6 7-9 8z"/><ellipse class="pv8" cx="16" cy="8" rx="3" ry="2.500"/><path class="kl" d="M3 4l18 18"/></svg>
    <svg class="ti ti-r" viewBox="0 0 24 24"><circle class="pv9" cx="12" cy="12" r="10"/><path class="pv10" d="M12 2a10 10 0 0 0 0 20z"/><path class="pv11" d="M12 2a10 10 0 0 1 0 20z"/></svg>
    <i class="tsep tsep-3"></i>
    <svg class="ti ti-r" viewBox="0 0 24 24"><path class="pv12" d="M8 2h8l6 6v8l-6 6H8l-6-6V8z"/></svg>
    <i class="drop drop-r"></i>
  </div>

  <div class="canvas">
    <div class="sheet"></div>
    <div class="grid"></div>
    <svg class="dia" viewBox="964 197 956 978">
      <g class="wires">
        <path class="wg-a" d="M1236 692H1585"/>
        <path class="wg-b" d="M1438 823C1490 820 1500 770 1525 745 1545 722 1560 708 1585 708"/>
        <path class="wg-c" d="M1441 876C1490 876 1502 830 1512 800 1520 770 1535 723 1585 723"/>
        <path class="wg-b" d="M1316 838C1350 838 1350 868 1385 868"/>
        <path class="wg-b" d="M1316 891C1350 891 1350 885 1385 885"/>
        <path class="wg-d" d="M1316 891C1360 891 1340 831 1382 831"/>
        <path class="wg-d" d="M1318 811C1350 811 1350 815 1382 815"/>
      </g>
      <rect class="sel-box" x="1174.500" y="669.500" width="275" height="241"/>

      <g class="nodes">
        <rect class="nd" x="1194.500" y="682.500" width="41" height="20" rx="3"/>
        <path class="hex" d="M1204 692l5-9h10l5 9-5 9h-10z"/>
        <path class="hexi" d="M1209 697l1-10 8-2 1 12z"/>
        <circle class="port" cx="1193" cy="692" r="2.500"/><circle class="port" cx="1237" cy="692" r="2.500"/>

        <g class="soft">
          <rect class="nd" x="1194.500" y="722.500" width="40" height="20" rx="3"/>
          <path class="hex" d="M1204 732l5-9h10l5 9-5 9h-10z"/>
          <path class="hexx" d="M1210 729l8 6M1218 729l-8 6"/>
          <circle class="port" cx="1193" cy="732" r="2.500"/><circle class="port" cx="1236" cy="732" r="2.500"/>

          <rect class="sl" x="1189.500" y="803.500" width="129" height="16" rx="2"/>
          <path class="slh" d="M1205.500 804v15"/>
          <text class="lab" x="1193" y="815">A</text>
          <path class="slt" d="M1213 810v-3M1213 808.500H1310"/>

          <rect class="sl" x="1187.500" y="829.500" width="128" height="17" rx="2"/>
          <path class="slh" d="M1202.500 830v16"/>
          <text class="lab" x="1191" y="841">A</text>
          <path class="slt" d="M1210 837v-3M1210 835.500H1307"/>
          <path class="dia-m" d="M1254 834l3 3-3 3-3-3z"/>
          <text class="lab" x="1260" y="840">9</text>

          <rect class="nd" x="1383.500" y="806.500" width="53" height="36" rx="2"/>
          <rect class="xb" x="1402" y="816" width="13" height="13" rx="2"/>
          <path class="xm" d="M1405 819.500l7 6M1412 819.500l-7 6"/>
          <text class="lab" x="1389" y="818">A</text><text class="lab" x="1389" y="834">B</text><text class="lab" x="1421" y="827">R</text>
          <circle class="port" cx="1382" cy="815" r="2.500"/><circle class="port" cx="1382" cy="831" r="2.500"/><circle class="port" cx="1438" cy="823" r="2.500"/>
        </g>

        <rect class="sl" x="1187.500" y="883.500" width="128" height="16" rx="2"/>
        <rect class="slb" x="1188" y="884" width="15" height="15"/>
        <text class="lab lab-d" x="1191" y="895">B</text>
        <path class="slt" d="M1210 890v-3M1210 888.500H1307"/>
        <path class="dia-m" d="M1220 888l3 3-3 3-3-3z"/>
        <text class="lab lab-d" x="1226" y="895">2</text>
        <circle class="port" cx="1317" cy="891" r="2.500"/>

        <rect class="nd" x="1386.500" y="859.500" width="52" height="35" rx="2"/>
        <rect class="xb xb-w" x="1403" y="869" width="14" height="14" rx="2"/>
        <path class="xm" d="M1406 873l7 6M1413 873l-7 6"/>
        <text class="lab" x="1391" y="871">A</text><text class="lab" x="1391" y="887">B</text><text class="lab" x="1423" y="879">R</text>
        <circle class="port" cx="1385" cy="868" r="2.500"/><circle class="port" cx="1385" cy="885" r="2.500"/><circle class="port" cx="1440" cy="876" r="2.500"/>

        <rect class="srf" x="1587.500" y="682.500" width="58" height="51" rx="4"/>
        <text class="lab2" x="1595" y="695">S</text><text class="lab2" x="1595" y="711">U</text><text class="lab2" x="1596" y="727">V</text>
        <text class="lab2" x="1626" y="695">P</text><text class="lab2" x="1626" y="711">N</text><text class="lab2" x="1626" y="727">uv</text>
        <path class="orng" d="M1609 700h11l-4 14h-11z"/>
        <circle class="port2" cx="1586" cy="691" r="2.500"/><circle class="port2" cx="1586" cy="707" r="2.500"/><circle class="port2" cx="1586" cy="723" r="2.500"/>
        <circle class="port2" cx="1646" cy="691" r="2.500"/><circle class="port2" cx="1646" cy="707" r="2.500"/><circle class="port2" cx="1646" cy="723" r="2.500"/>
      </g>

      <circle class="shade" cx="1320" cy="781" r="135"/>
      <path class="spoke" d="M1320 660V902M1199 781H1441M1234 695 1406 867M1406 695 1234 867"/>
      <circle class="hub" cx="1320" cy="781" r="26.500"/>
      <circle class="hub-rim" cx="1320" cy="781" r="25"/>
      <path class="hubx" d="M1317.500 778.500l5 5M1322.500 778.500l-5 5"/>
      <path class="hubg" d="M1307 803c5-2 10-1 11 2-4 1-8 0-11-2z"/>

      <g class="radial">
        <rect class="box1" x="1310" y="681" width="21" height="20" rx="2"/><path class="box2" d="M1318 681h5v13l-2.500 3-2.500-3z"/><path class="box3" d="M1310.500 687h20"/>
        <rect class="hl" x="1370.500" y="703.500" width="27" height="27" rx="2"/>
        <use href="#blind" x="1373" y="706" width="22" height="22"/>
        <use href="#head" x="1347" y="730" width="23" height="24"/>
        <path class="fid" d="M1320 717a6 6 0 0 1 4 9 6 6 0 1 1-5 8 6 6 0 1 1-5-8 6 6 0 0 1 6-9z"/>
        <circle class="fid2" cx="1319" cy="721" r="2.500"/><circle class="fid2" cx="1314" cy="730" r="2.500"/><circle class="fid2" cx="1326" cy="727" r="2.500"/>
        <rect class="gbox" x="1269.500" y="730.500" width="23" height="23"/>
        <circle class="gt1" cx="1281" cy="742" r="6"/><circle class="gt2" cx="1281" cy="742" r="3.500"/><circle class="gt3" cx="1281" cy="742" r="1.800"/>
        <path class="mp1" d="M1255 773l7 2 7-2 7 1v16l-7-1-7 2-7-2z"/>
        <path class="mp4" d="M1255 781c5-4 8 0 11-2s6-3 10-1v4c-4-1-7 0-10 2s-6-2-11 1z"/>
        <path class="mp2" d="M1255 785c5-3 8 1 11-1s6-3 10-2v8l-7-1-7 2-7-2z"/>
        <path class="mp3" d="M1255 773l7 2 7-2 7 1v16l-7-1-7 2-7-2z"/>
        <use href="#tog" x="1364" y="769" width="22" height="24"/>
        <g class="fade"><use href="#tog" x="1398" y="769" width="22" height="24"/></g>
        <path class="egg" d="M1349 817c1-3 4-2 6-4s5-2 6 1 4 3 5 6 0 6-3 7-6 1-9 0-6-1-6-5 0-3 1-5z"/>
        <circle class="yolk" cx="1360" cy="821" r="4.500"/>
        <circle class="glass" cx="1277" cy="816" r="7"/><path class="handle" d="M1282 821l9 9"/>
        <circle class="glass" cx="1379" cy="844" r="5.500"/><path class="handle" d="M1383 848l6 7"/>
        <path class="pin" d="M1383 842c-1-4 1-6 4-7l1-2c3-1 6 2 5 5l-2 1c-1 3-3 4-8 3z"/><circle class="pin2" cx="1388" cy="838" r="1.500"/>
        <path class="shack" d="M1315 835v-5a5 5 0 0 1 10 0v2"/>
        <rect class="lkb" x="1313.500" y="835.500" width="13" height="11" rx="1"/>
        <path class="lky" d="M1314 843h12v3h-12z"/>
        <path class="lks" d="M1316 846l3-3M1321 846l3-3"/>
        <path class="play" d="M1310.500 860.500 1329 871 1310.500 881.500z"/>
      </g>

      <g class="widgets">
        <use href="#bH" x="1305.500" y="651.500" width="11" height="11"/>
        <use href="#bL" x="1293.500" y="663.500" width="11" height="11"/><use href="#bP" x="1305.500" y="663.500" width="11" height="11"/><use href="#bR" x="1317.500" y="663.500" width="11" height="11"/>
        <use href="#bL" x="1293.500" y="904.500" width="11" height="11"/><use href="#bP" x="1305.500" y="904.500" width="11" height="11"/><use href="#bR" x="1317.500" y="904.500" width="11" height="11"/>
        <use href="#bH" x="1305.500" y="917.500" width="11" height="11"/>
        <use href="#bU" x="1168.500" y="771.500" width="11" height="11"/><use href="#bP" x="1168.500" y="783.500" width="11" height="11"/><use href="#bD" x="1168.500" y="795.500" width="11" height="11"/>
        <use href="#bV" x="1156.500" y="783.500" width="11" height="11"/>
      </g>

      <g class="dock">
        <rect class="dk-b" x="963" y="1147.500" width="64" height="30"/>
        <path class="orng" d="M974 1153h11l-3 18h-11z"/>
        <rect class="dk-btn" x="996" y="1150" width="23" height="22" rx="2"/>
        <path class="dk-a" d="M1006 1155v9M1003 1161l3 4 3-4M1001 1168h10"/>
      </g>

      <path class="cp-a" d="M1859 1120l9-1 1 2 5-3 3 3-6 3 0 5z"/>
      <circle class="cp" cx="1889" cy="1137" r="20"/>
      <circle class="cp-r" cx="1889" cy="1137" r="18.500"/>
      <path class="cp-t" d="M1877 1125l7 1-6 6zM1901 1125l-7 1 6 6zM1877 1149l7-1-6-6zM1901 1149l-7-1 6-6z"/>
    </svg>
    <div class="tip">
      <div class="tip-h">
        <svg viewBox="0 0 24 24"><use href="#blind"/></svg>
        <span>Disable Preview</span>
      </div>
      <div class="tip-b">Disable preview for all selected objects</div>
    </div>
  </div>
  <footer class="gh-stat"><span class="dd">..</span><span class="ver">0.9.0076</span><svg viewBox="0 0 10 10"><path d="M8 1h1v1H8zM5 4h1v1H5zM8 4h1v1H8zM2 7h1v1H2zM5 7h1v1H5zM8 7h1v1H8z"/></svg></footer>
</section>
</div>
</body>
</html>
```

FILE: styles.css
```css
*{box-sizing:border-box}
html,body{margin:0;padding:0}
body{width:1920px;height:1200px;overflow:hidden;background:#222;font:12px "Liberation Sans",Arial,sans-serif;color:#111}
.defs{position:absolute}
.desk{display:flex;width:1920px;height:1200px}
u{text-underline-offset:1px}
i{font-style:normal}

/* shared svg vocabulary */
.kl{fill:none;stroke:#000;stroke-width:1}
.kt{fill:none;stroke:#000;stroke-width:2;stroke-linecap:round}
.kt2{fill:none;stroke:#000;stroke-width:1.600}
.kt3{fill:none;stroke:#000;stroke-width:2.600;stroke-linecap:round}
.rd{fill:none;stroke:#7d1010;stroke-width:2.200}
.wh{fill:#fff;stroke:#000;stroke-width:1}
.wh2{fill:#fff;stroke:#000;stroke-width:1.500}
.gc{fill:#e4ebff;stroke:#10183c;stroke-width:1.100}
.bl{fill:#6f8ff2;stroke:#1a2a70;stroke-width:1}
.lb{fill:#a8bdf8;stroke:#1a2a70;stroke-width:1}
.lb2{fill:#cfe0ff;stroke:#1a2a70}
.db{fill:#2a50c8;stroke:#0a1a60}
.dk{fill:none;stroke:#1a2a70;stroke-width:.8}
.wl{fill:none;stroke:#fff;stroke-width:1.200}
.wl2{fill:none;stroke:#fff;stroke-width:2}
.ds{fill:none;stroke:#000;stroke-dasharray:2 1}
.ds2{fill:none;stroke:#222;stroke-dasharray:2 2}
.dl{fill:none;stroke:#000;stroke-width:1.400;stroke-dasharray:1.500 1.500}
.dl2{fill:none;stroke:#000;stroke-width:2.400;stroke-dasharray:2.500 3}
.dots{fill:none;stroke:#223;stroke-width:2;stroke-dasharray:2 2}
.rl{fill:none;stroke:#c00;stroke-width:1.800}
.grn{fill:none;stroke:#2a9a30;stroke-width:1.500}
.gy{fill:none;stroke:#999}
.wr{fill:#fff;stroke:#fff;fill-opacity:.3;stroke-width:2}
.gf{fill:#aaa;stroke:#444}
.wg{fill:#ddd;stroke:#000}
.gf2{fill:#bbb;stroke:#333}
.gf3{fill:#999;stroke:#333}
.gb{fill:#888;stroke:#333}
.og{fill:#f6a800;stroke:#533}
.og0{fill:#f8ac00;stroke:#e08a00}
.og2{fill:#ffc766;stroke:#7a5a20}
.og3{fill:#f0a838;stroke:#7a5a20}
.li{fill:#8c8cdc;stroke:#111}
.wk{fill:#fff;stroke:#000;stroke-width:2}
.nv{fill:#1a1a70;stroke:#111}
.wt{fill:none;stroke:#fff;stroke-width:1.800}
.ck{fill:#000}
.arr{fill:#e40000;stroke:#8a0000}
.ars{fill:none;stroke:#aaa;stroke-width:1.500}
.ttxt{font:bold 23px "Liberation Serif",serif;text-anchor:middle;fill:#6f8ff2;stroke:#1a2a70;stroke-width:.7}

/* rhino */
.rh{width:961px;display:flex;flex-direction:column;border-left:2px solid #1e1e1e;border-top:2px solid #333;border-bottom:2px solid #2a2a2a;background:#e0e4ec}
.rh-title{height:29px;display:flex;align-items:center;background:#fff;padding-left:7px}
.rh-logo{width:16px;height:16px;margin-right:7px}
.lg1{fill:#333}
.lg2{fill:#eee}
.rh-name{color:#8a8a8a;font-size:12px}
.ctrls{margin-left:auto;display:flex;align-items:center;padding-right:1px}
.ctrls svg{width:46px;height:16px;fill:none;stroke:#111;stroke-width:1}
.ctrls-off svg{stroke:#8c8c8c}
.rh-menu{height:18px;background:#fff;display:flex;gap:13px;align-items:center;padding-left:8px;color:#555}
.cmd{background:#e9e9ee;display:grid;grid-template-columns:936px 15px;grid-template-rows:27px 18px;row-gap:2px;padding:5px 0 7px 6px;height:59px}
.cmd-hist{background:#fff;padding-left:2px;line-height:14px;border-left:1px solid #aaa;padding-top:1px}
.cmd-line{background:#fff;font-weight:bold;padding-left:2px;line-height:17px;border-left:1px solid #aaa}
.cmd-scroll svg,.cmd-spin svg{display:block;width:15px}
.cmd-scroll{background:#f3f3f3}
.cmd-spin{background:#ececec}
.chev{fill:none;stroke:#111;stroke-width:1.600}
.scr{fill:#ddd}
.spin{fill:#111}
.rh-tabs{height:16px;display:flex;align-items:flex-end;background:#e6e8f0;position:relative;overflow:hidden}
.tabs-clip{width:928px;display:flex;overflow:hidden;height:16px;padding-left:9.600px;gap:1px;letter-spacing:-.4px}
.tab{position:relative;flex:none;padding:0 7.400px;line-height:16px;border-top:1px solid #b4b9c8;border-right:1px solid #b4b9c8;border-radius:0 4px 0 0;color:#222}
.tab::before{content:"";position:absolute;left:-5px;top:-1px;bottom:0;width:9px;border-left:1px solid #b4b9c8;border-top:1px solid #b4b9c8;transform:skewX(-28deg);z-index:0}
.tab.on{background:#f8f9fc;z-index:1}
.tab.on::before{background:#f8f9fc;z-index:-1}
.more{position:absolute;left:929px;top:0;width:14px;font-weight:bold;font-size:13px;line-height:15px;text-align:center}
.gear{position:absolute;left:942px;top:0;width:16px;height:16px}
.gr1{fill:none;stroke:#999;stroke-width:2.400;stroke-dasharray:2.200 1}
.gr2{fill:none;stroke:#aaa}
.rh-bar{height:46px;display:flex;align-items:flex-start;padding-left:6px;background:linear-gradient(#f3f4f8,#dde1ea);border-left:2px solid #ccd}
.t{position:relative;flex:none;width:28px;height:28px;display:flex;align-items:center;justify-content:center}
.t svg{width:24px;height:24px;display:block}
.m::after{content:"";position:absolute;right:0;bottom:1px;border-left:6px solid transparent;border-bottom:6px solid #777}

.rh-main{height:980px;display:flex;min-height:0}
.side{width:66px;flex:none;background:#dfe3eb;border-right:1px solid #c4c8d0}
.side-grip{height:3px;margin:3px 5px 1px;border-top:1px solid #b6bac4;border-bottom:1px solid #b6bac4}
.side-grid{display:grid;grid-template-columns:29px 29px;grid-auto-rows:28.050px;padding-left:1px}
.center{width:747px;flex:none;display:flex;flex-direction:column}
.vp{height:958px;position:relative;background:#4e4e4e;overflow:hidden}
.vp-svg{position:absolute;left:0;top:0;width:747px;height:958px}
.ptx{fill:none;stroke:#f00;stroke-width:3;shape-rendering:crispEdges}
.ax-g{fill:none;stroke:#4f9f5a;stroke-width:1.500}
.ax-r{fill:none;stroke:#8b3a3a;stroke-width:1}
.ax-g2{fill:none;stroke:#3cb43c;stroke-width:2}
.ax-r2{fill:none;stroke:#bb3a3a;stroke-width:2}
.ax-b{fill:#2020ff}
.axt{font:bold 13px "Liberation Sans",sans-serif}
.axt-y{fill:#1ee61e}
.axt-x{fill:#f22}
.axt-z{fill:#1414ff}
.vp-tag{position:absolute;left:0;top:0;width:47px;height:18px;background:#7f9fc3;display:flex;z-index:2;line-height:18px}
.vp-name{width:37px;text-align:center;color:#123}
.vp-btn{width:10px;border-left:1px solid #123;position:relative}
.vp-btn::after{content:"";position:absolute;left:2px;top:7px;border:3.500px solid transparent;border-top:4px solid #111}
.vp-tabs{height:22px;display:flex;align-items:flex-start;gap:1px;padding-left:0;letter-spacing:-.2px}
.vt{position:relative;flex:none;padding:0 8px;height:21px;line-height:22px;background:#d4d8ea;border:1px solid #aeb2c2;border-top:0;border-left:0;border-radius:0 0 4px 0;color:#222}
.vt::before{content:"";position:absolute;left:-3px;top:0;bottom:-1px;width:8px;background:inherit;border-left:1px solid #aeb2c2;border-bottom:1px solid #aeb2c2;transform:skewX(22deg);z-index:0;border-radius:0 0 0 3px}
.vt.on{background:#fff;z-index:2;margin-left:2px}
.vt-add{color:#777;font-size:15px;margin-left:3px;background:#e0e4ec}

.pnl{width:139px;flex:none;margin-left:8px;display:flex;flex-direction:column;height:976px}
.pnl-tabs{height:29px;display:flex;align-items:flex-end;position:relative}
.pnl-tabs::before{content:"";position:absolute;left:1px;right:0;top:3px;height:3px;border-top:1px solid #b6bac4;border-bottom:1px solid #b6bac4}
.pt{position:relative;width:29px;height:21px;display:flex;align-items:center;justify-content:center;background:#d4d8e8;border:1px solid #b4b8c8;border-bottom:0;border-radius:6px 14px 0 0}
.pt:first-child{margin-left:-2px}
.pt svg{width:17px;height:17px}
.pt.on{background:#f4f5f9}
.w1{fill:none;stroke:#e8443c;stroke-width:3}
.w2{fill:none;stroke:#3c6ce8;stroke-width:3;stroke-dasharray:17 18}
.w3{fill:none;stroke:#f0c020;stroke-width:3;stroke-dasharray:8 27}
.ly1{fill:#e04020;stroke:#222}
.ly2{fill:#fff;stroke:#222}
.ly3{fill:#3068d0;stroke:#222}
.mn{fill:#333;stroke:#888}
.mn2{fill:#555}
.hp{fill:#f4f4f8;stroke:#445}
.hp2{fill:#3068d0}
.hp3{fill:none;stroke:#fff}
.gear-p{left:121px;top:10px}
.pnl-body{height:931px;background:#fff;border-left:1px solid #999;border-top:1px solid #aaa;overflow:hidden}
.pnl-tools{height:22px;display:flex;align-items:center;gap:6px;padding-left:3px;overflow:hidden}
.pnl-tools svg{width:15px;height:17px;flex:none}
.dc{fill:#fff;stroke:#333}
.xx{fill:none;stroke:#333;stroke-width:2.600}
.tri{fill:#bbb;stroke:#444}
.tri2{fill:#ccc;stroke:#bbb}
.tri3{fill:#ddd;stroke:#555}
.lrow{display:grid;grid-template-columns:78px 17px 17px 17px 8px;height:17px;align-items:center;border-bottom:1px dotted #ccc;line-height:16px;font-size:11.500px}
.lrow span:first-child,.lrow b:first-child{padding-left:7px;white-space:nowrap}
.lrow svg{width:14px;height:14px;justify-self:center}
.lhead{height:24px;border-bottom:1px solid #ddd}
.lhead i{border-left:1px solid #ddd;height:100%}
.lhead span:first-child{padding-left:5px}
.lrow-def b{padding-left:8px;font-size:12px}
.chk{text-align:center;font-size:12px}
.sw{width:8px;height:14px;background:#000}
.sw-b{background:#2080d8}
.bu{fill:#4aa0e8;stroke:#000;stroke-width:1}
.bu2{fill:none;stroke:#000;stroke-width:1.400}
.lk{fill:none;stroke:#000;stroke-width:1.200}
.sel{background:#0a78d7;color:#fff;border-bottom:1px dotted #fff}
.sel .bu{stroke:#fff}
.sel .bu2,.sel .lk{stroke:#fff}
.pnl-scroll{height:16px;background:#f1f1f1;border-left:1px solid #999;display:flex;align-items:center;color:#333;font-size:14px;line-height:14px}
.lt{width:17px;text-align:center}
.thumb{width:35px;height:16px;background:#cdcdcd}
.rt{margin-left:auto;width:16px;text-align:center}

.osnap{height:29px;display:flex;align-items:center;gap:6px;padding:4px 0 0 12px;font-size:11px;border-bottom:1px solid #b0b4bc;background:#e0e4ec}
.os{display:flex;align-items:center;gap:5px;color:#222}
.bx{width:13px;height:13px;background:#fff;border:1px solid #333;position:relative}
.ck-on::after{content:"";position:absolute;left:3px;top:0;width:5px;height:9px;border-right:1px solid #222;border-bottom:1px solid #222;transform:rotate(40deg)}
.bx-g{background:#d8d8d8;border-color:#bbb;height:15px;width:14px}
.stat{flex:1;display:grid;grid-template-columns:46px 73px 72px 73px 74px 144px 62px 40px 46px 44px 72px 54px 92px 37px 1fr;padding-left:3px;align-items:stretch;background:#e0e4ec;line-height:20px;color:#222;overflow:hidden}
.stat span{border-right:1px solid #b0b4bc;text-align:center;white-space:nowrap;overflow:hidden}
.stat .st-l{display:flex;align-items:center;gap:2px;text-align:left;padding-left:3px}
.st-sw{width:14px;height:14px;background:#000}
.stat .st-on{background:#e2f0fb;font-weight:bold;color:#111}
.stat .st-end{text-align:left;padding-left:4px;border-right:0}

/* grasshopper */
.gh{flex:1;min-width:0;display:flex;flex-direction:column;border-left:3px solid #1a7fd6;border-top:2px solid #1a7fd6;border-bottom:2px solid #1a7fd6;background:#f5f5f5}
.gh-title{height:29px;flex:none;display:flex;align-items:center;background:#fff;padding-left:7px;color:#111}
.gh-title .ctrls{padding-right:0}
.gh-menu{height:24px;flex:none;display:flex;gap:15px;align-items:center;padding:0 10px 0 13px;background:#f6f6f6}
.gh-menu em{font-style:normal;margin-left:auto}
.gh-tabs{height:23px;flex:none;display:flex;gap:16.700px;align-items:center;background:#f0f0f0;padding-left:7px;color:#7a7a7a;position:relative;letter-spacing:-.4px}
.gh-tabs .on{background:#fff;color:#111;border:1px solid #aaa;border-bottom:0;border-radius:6px 6px 0 0;height:23px;line-height:20px;margin:0 -8px;padding:0 7px;z-index:1;position:relative;top:1px}
.ribbon{height:87px;flex:none;display:flex;gap:4px;padding:2px 0 0 2px;background:linear-gradient(#eeeeee,#d6d6d6 70%,#e6e6e6);border-top:1px solid #9c9c9c;border-bottom:2px solid #7e7e7e;border-radius:5px 5px 0 0}
.grp{height:73px;display:flex;flex-direction:column;border:1px solid #9a9a9a;border-radius:5px;overflow:hidden;background:linear-gradient(#e2e2e2,#cfcfcf)}
.g1{width:175px}.g2{width:69px}.g3{width:108px}.g4{width:99px}.g5{width:98px}
.grp-b{height:58px;display:flex}
.sec{display:grid;grid-template-rows:28px 28px;grid-auto-flow:column;grid-auto-columns:28px;padding:0 4px;border-left:1px solid #bbb;flex:none}
.sec:first-child{border-left:0}
.sec-w{padding-left:2px}
.sec-s{padding-left:0;padding-right:4px}
.gi{display:flex;align-items:center;justify-content:center}
.gi svg{width:24px;height:24px}
.gl{fill:none;stroke:#555;stroke-width:1}
.gd{fill:#fff;stroke:#000;stroke-width:1}
.wp{fill:#fff;stroke:#000;stroke-width:1.200}
.ogf{fill:#f4a020;stroke:#a03000;stroke-width:1}
.ogr{fill:#f9a820;stroke:#b02000;stroke-width:1.500}
.blk{fill:none;stroke:#000;stroke-width:1.600}
.blk2{fill:#000}
.grp-h{height:14px;background:#262626;color:#fff;text-align:center;line-height:14px;position:relative;font-size:12px;padding-right:12px;letter-spacing:-.2px}
.grp-h i{position:absolute;right:3px;top:-1px;color:#999;font-weight:bold;font-size:13px}
.gh-tool{height:32px;flex:none;display:flex;align-items:center;background:linear-gradient(#fcfcfc,#f0f0f0);padding-left:7px;position:relative}
.ti{width:24px;height:24px;flex:none}
.ti+.ti{margin-left:4px}
.tsep{width:1px;height:24px;background:#c6c6c6;margin:0 4px 0 7px;flex:none}
.tsep-2{margin:0 5px 0 8px}
.tsep-3{margin:0 0 0 5px}
.ff1{fill:#f0f0f0;stroke:#444}
.ff2{fill:#68b848;stroke:#2a6a1a}
.fl1{fill:#1a5cb8;stroke:#0a3070}
.fl2{fill:#e8eef8}
.fl3{fill:#d4dce8}
.fl4{fill:#1a5cb8}
.combo{width:70px;height:24px;background:#fff;border:1px solid #999;display:flex;align-items:center;justify-content:space-between;padding:0 3px;font-size:13px;flex:none}
.combo svg{width:11px;height:8px;fill:none;stroke:#555;stroke-width:1.200}
.ti-z{margin-left:3px}
.zm{fill:none;stroke:#000;stroke-width:2.400}
.zm2{fill:none;stroke:#000;stroke-width:1.500}
.drop{width:0;height:0;border:3.500px solid transparent;border-top:4px solid #111;margin:4px 5px 0 5px;flex:none}
.drop-r{margin:4px 3px 0 3px}
.ey1{fill:#fff;stroke:#1a3a5a;stroke-width:1.400}
.ey2{fill:#4aa6e0;stroke:#123}
.ey3{fill:#111}
.br1{fill:#e8403a;stroke:#8a1010}
.br2{fill:none;stroke:#5a2a1a;stroke-width:1.800}
.spacer{flex:1}
.ti.ti-r{margin-left:5px}
.ti.ti-r2{margin-left:3px}
.ti-sel{width:28px;height:28px;border:1px solid #1a7fd6;display:flex;align-items:center;justify-content:center;margin-left:3px;flex:none}
.ti-sel svg{width:24px;height:24px}
.pv1{fill:#d8d8d8;stroke:#333}
.pv2{fill:#888;stroke:#222}
.pv3{fill:#222}
.pv4{fill:#f0f0f0;stroke:#333}
.pv5{fill:#c81414;stroke:#5a0a0a}
.pv6{fill:#8a0a0a;stroke:#ff8080}
.pv7{fill:#5fae20;stroke:#2a5a10}
.pv8{fill:#2a6010;stroke:#d8f0a0}
.pv9{fill:none;stroke:#222}
.pv10{fill:#f09010;stroke:#333}
.pv11{fill:#eee;stroke:#333}
.pv12{fill:#5cacec;stroke:#123a6a;stroke-width:1.400}

.canvas{flex:1;min-height:0;position:relative;overflow:hidden;background:repeating-linear-gradient(135deg,#d3d1ca 0 3px,#cdcbc4 3px 5px)}
.sheet{position:absolute;left:147px;top:426px;right:0;bottom:0;background:#d4d0c8;border-left:2px solid #111;border-top:2px solid #111;box-shadow:0 0 20px 4px rgba(0,0,0,.62)}
.grid{position:absolute;inset:0;background-image:repeating-linear-gradient(180deg,transparent 0 25px,rgba(90,90,80,.18) 25px 26px,transparent 26px 40px),repeating-linear-gradient(90deg,transparent 0 27px,rgba(90,90,80,.25) 27px 28px,transparent 28px 120px)}
.dia{position:absolute;left:0;top:0;width:956px;height:978px}
.wg-a{fill:none;stroke:#a9bc86;stroke-width:2.500}
.wg-b{fill:none;stroke:#92c062;stroke-width:2.500}
.wg-c{fill:none;stroke:#a2bc88;stroke-width:2.500}
.wg-d{fill:none;stroke:#9cb87a;stroke-width:2}
.sel-box{fill:none;stroke:#6c6c68;stroke-dasharray:3 2}
.nd{fill:url(#gNode);stroke:#62784e}
.soft{opacity:.72}
.sl{fill:url(#gSlide);stroke:#62784e}
.slh{stroke:#62784e;fill:none}
.slb{fill:#7ab850}
.slt{fill:none;stroke:#7e9c66;stroke-width:1}
.dia-m{fill:#e4f0d0;stroke:#445}
.hex{fill:#7a7a78;stroke:#666}
.hexi{fill:#dcdcdc;stroke:#999}
.hexx{fill:none;stroke:#ddd;stroke-width:2.200}
.port{fill:#eee;stroke:#555}
.port2{fill:#fff;stroke:#111;stroke-width:1.200}
.lab{font:11px "Liberation Sans",sans-serif;fill:#54664a}
.lab-d{fill:#2c3826}
.lab2{font:11px "Liberation Sans",sans-serif;fill:#222}
.xb{fill:#d6d6ce;stroke:#93a88a}
.xb-w{fill:#eee}
.xm{fill:none;stroke:#333;stroke-width:2}
.srf{fill:url(#gSurf);stroke:#666;stroke-width:1.200}
.orng{fill:url(#gOrange);stroke:#7a3300;stroke-dasharray:2 2}
.shade{fill:url(#gShade)}
.spoke{fill:none;stroke:rgba(40,40,40,.35);stroke-dasharray:3 3}
.hub{fill:url(#gHub);stroke:#3c3c3c;stroke-width:1.500}
.hub-rim{fill:none;stroke:#f2f0ea;stroke-width:1.500}
.hubx{fill:none;stroke:#777}
.hubg{fill:#58a838;stroke:#2a5a1a}
.box1{fill:url(#gBox);stroke:#8c5a28}
.box2{fill:#b87a3c}
.box3{fill:none;stroke:#a67038}
.hl{fill:#9cc0da;stroke:#6f9cc0}
.hd{fill:url(#gHead);stroke:#444;stroke-width:.7}
.bf{fill:#1e1e1e}
.fid{fill:#7fd832;stroke:#3c6a18}
.fid2{fill:#556;stroke:#2a4a10}
.gbox{fill:#e2e2e2;stroke:#2c2c2c;stroke-width:1}
.gt1{fill:none;stroke:#3a3a3a;stroke-width:2.400;stroke-dasharray:2.500 2.200}
.gt2{fill:none;stroke:#3a3a3a;stroke-width:2.500}
.gt3{fill:#e2e2e2}
.mp1{fill:#6ab0f0}
.mp4{fill:#f0e070}
.mp2{fill:#72c83e}
.mp3{fill:none;stroke:#3c6a8a}
.tg1{fill:#eee;stroke:#333;stroke-width:1.300}
.tg2{fill:#bbb;stroke:#222}
.tg3{fill:#5c5c5c}
.fade{opacity:.55}
.egg{fill:#fafafa;stroke:#999}
.yolk{fill:#f08c10}
.glass{fill:url(#gGlass);stroke:#222;stroke-width:1.400}
.handle{fill:none;stroke:#3a3a3a;stroke-width:2.400}
.pin{fill:url(#gRed);stroke:#6a0808}
.pin2{fill:#fff}
.shack{fill:none;stroke:#222;stroke-width:1.800}
.lkb{fill:#333;stroke:#111}
.lky{fill:#f0d020}
.lks{fill:none;stroke:#111;stroke-width:1.500}
.play{fill:#3c3c3c;stroke:#161616;stroke-width:1.200}
.wb{fill:#7e7e7a;stroke:#5c5c58}
.wg2{fill:none;stroke:#eee;stroke-width:1}
.dk-b{fill:url(#gDock);stroke:#000;stroke-width:1.500}
.dk-btn{fill:#d6d6d6;stroke:#222}
.dk-a{fill:none;stroke:#111;stroke-width:1.500}
.cp{fill:url(#gBall);stroke:#111;stroke-width:1}
.cp-r{fill:none;stroke:#fff;stroke-width:2}
.cp-t{fill:#fff}
.cp-a{fill:#111}
.tip{position:absolute;left:454px;top:553px;width:207px;height:57px;border:1px solid #000;background:#ffffcd;display:flex;flex-direction:column}
.tip-h{height:33px;background:#ffd060;display:flex;align-items:center;padding-left:5px}
.tip-h svg{width:22px;height:24px}
.tip-h span{font:italic 15px "Liberation Sans",sans-serif;letter-spacing:-.5px;margin-left:14px;color:#111}
.tip-b{padding-left:6px;line-height:22px;letter-spacing:-.4px;white-space:nowrap;color:#111}
.gh-stat{flex:none;margin-top:3px;background:#f6f6f6;display:flex;align-items:center;padding-left:4px;color:#888;height:20px}
.dd{margin-top:3px}
.ver{margin-left:auto;margin-right:1px}
.gh-stat svg{width:10px;height:10px;fill:#999;margin:6px 0 0 0}
```
